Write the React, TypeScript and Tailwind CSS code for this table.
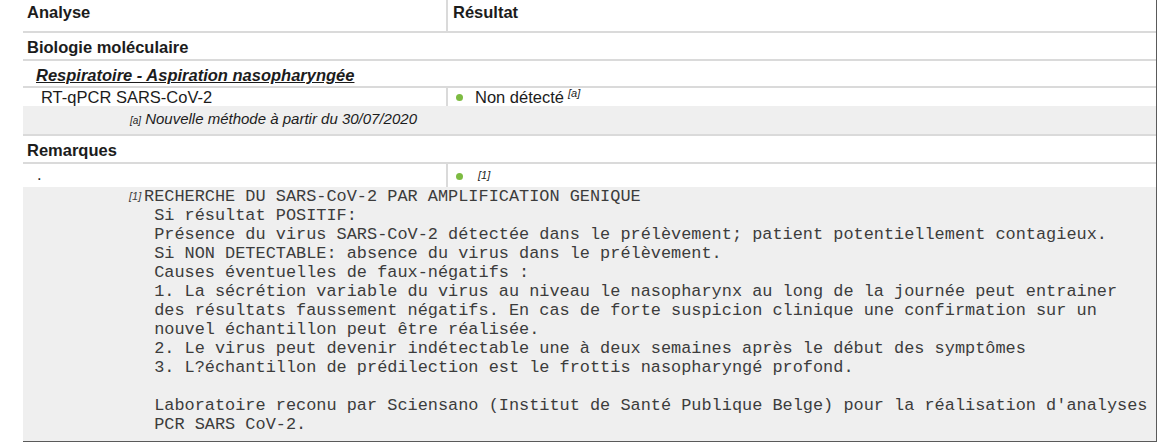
const noteLines = [
  ' Si résultat POSITIF:',
  ' Présence du virus SARS-CoV-2 détectée dans le prélèvement; patient potentiellement contagieux.',
  ' Si NON DETECTABLE: absence du virus dans le prélèvement.',
  ' Causes éventuelles de faux-négatifs :',
  ' 1. La sécrétion variable du virus au niveau le nasopharynx au long de la journée peut entrainer',
  ' des résultats faussement négatifs. En cas de forte suspicion clinique une confirmation sur un',
  ' nouvel échantillon peut être réalisée.',
  ' 2. Le virus peut devenir indétectable une à deux semaines après le début des symptômes',
  ' 3. L?échantillon de prédilection est le frottis nasopharyngé profond.',
  ' ',
  " Laboratoire reconu par Sciensano (Institut de Santé Publique Belge) pour la réalisation d'analyses",
  ' PCR SARS CoV-2.',
];

function Dot() {
  return <span className="inline-block w-[7px] h-[7px] rounded-full bg-[#7dbb42] mr-[12px] ml-[8px]" />;
}

export default function App() {
  return (
    <div className="w-[1166px] h-[444px] bg-white pl-[23px] font-['Liberation_Sans',Arial,sans-serif] text-[16.5px] text-[#1c1c1c]">
      <div className="w-[1134px] border-r border-b border-[#5a5a5a]">
        {/* en-tête */}
        <div className="grid grid-cols-[423px_1fr] h-[33px] border-b-2 border-[#dadada]">
          <div className="pl-[4px] pt-0 font-bold">Analyse</div>
          <div className="pl-[5px] pt-0 font-bold border-l-2 border-[#dadada]">Résultat</div>
        </div>

        <div className="h-[28px] border-b-2 border-[#dadada] pl-[4px] pt-[2px] font-bold">Biologie moléculaire</div>

        <div className="h-[27px] border-b-2 border-[#dadada] pl-[13px] pt-[2px] font-bold italic underline">
          Respiratoire - Aspiration nasopharyngée
        </div>

        <div className="grid grid-cols-[423px_1fr] h-[18px] leading-[18px]">
          <div className="pl-[18px]">RT-qPCR SARS-CoV-2</div>
          <div className="border-l-2 border-[#dadada] flex items-center">
            <Dot />
            <span>Non détecté</span>
            <span className="italic text-[11px] ml-[4px] -mt-[8px]">[a]</span>
          </div>
        </div>

        <div className="h-[30px] bg-[#efefef] border-b-2 border-[#dadada] pl-[107px] pt-[2px] italic text-[15px]">
          <span className="text-[10px] mr-[4px]">[a]</span>Nouvelle méthode à partir du 30/07/2020
        </div>

        <div className="h-[28px] border-b-2 border-[#dadada] pl-[4px] pt-[2px] font-bold">Remarques</div>

        <div className="grid grid-cols-[423px_1fr] h-[23px]">
          <div className="pl-[14px] -mt-[2px]">.</div>
          <div className="border-l-2 border-[#dadada] flex items-start pt-[9px]">
            <Dot />
            <span className="italic text-[11px] ml-[3px] -mt-[6px]">[1]</span>
          </div>
        </div>

        <div className="bg-[#efefef] pl-[106px] pb-[7px] font-['Liberation_Mono','Courier_New',monospace] text-[16.9px] leading-[19px] text-[#3c3c3c]">
          <div className="whitespace-pre">
            <span className="inline-block w-[15px] font-['Liberation_Sans',Arial,sans-serif] italic text-[11px] align-top">[1]</span>
            RECHERCHE DU SARS-CoV-2 PAR AMPLIFICATION GENIQUE
          </div>
          {noteLines.map((line, index) => (
            <div key={index} className="whitespace-pre pl-[15px]">
              {line}
            </div>
          ))}
        </div>
      </div>
    </div>
  );
}
